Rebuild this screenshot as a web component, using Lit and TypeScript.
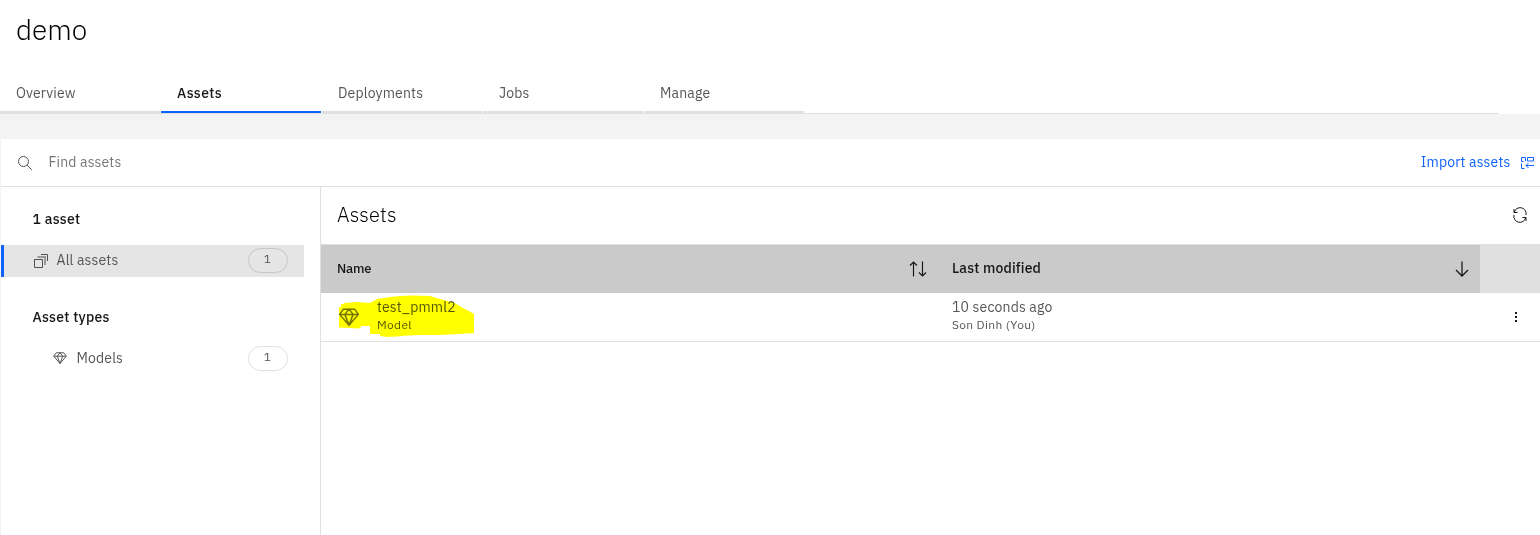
import { LitElement, html, css, svg } from "lit";
import { customElement } from "lit/decorators.js";

const diamond = svg`<path d="M8.5 5.500h15l5 7L16 27 3.500 12.500zM3.500 12.500h25M16 5.500l-5.500 7L16 27l5.500-14.500z" fill="none" stroke="currentColor" stroke-width="2" stroke-linejoin="round"/>`;

@customElement("app-root")
export class AppRoot extends LitElement {
  static styles = css`
    :host { display: block; height: 535px; overflow: hidden; background: #f3f3f3; color: #565656;
      font: 14px/18px "IBM Plex Sans", Roboto, "Liberation Sans", sans-serif; letter-spacing: 0.16px; }
    * { box-sizing: border-box; }
    svg { display: block; flex: none; }
    span { white-space: nowrap; }
    .page { height: 535px; display: flex; flex-direction: column; }
    .head { background: #fff; height: 114px; flex: none; display: flex; flex-direction: column; justify-content: space-between; }
    .title { margin: 0; padding: 12px 0 0 16px; font-size: 28px; line-height: 36px; font-weight: 300; letter-spacing: 0; color: #000; }
    .tabs { width: 1499px; height: 40px; display: flex; gap: 1px; border-bottom: 1px solid #e0e0e0; }
    .tab { width: 160px; height: 39px; padding: 10px 16px; border-bottom: 2px solid #e0e0e0; }
    .tab.on { color: #161616; font-weight: 500; border-color: #0f62fe; letter-spacing: 0.4px; }
    .panel { margin: 25px 0 0 1px; background: #fff; flex: 1; display: flex; flex-direction: column; min-height: 0; }
    .search { height: 48px; flex: none; border-bottom: 1px solid #e0e0e0; display: flex; align-items: center; padding: 0 5px 0 16px; color: #767676; }
    .search span { padding-bottom: 1px; }
    .find { margin-left: 15.5px; flex: 1; }
    .import { color: #0f62fe; margin-right: 10.5px; }
    .body { display: flex; flex: 1; min-height: 0; }
    .side { width: 320px; border-right: 1px solid #e0e0e0; padding-top: 23px; }
    .group { padding-left: 31.5px; color: #161616; font-weight: 500; height: 18px; letter-spacing: 0.25px; }
    .item { width: 303px; height: 32px; display: flex; align-items: center; padding: 0 16px 0 32px; }
    .all { margin: 17px 0 31px; background: #e5e5e5; border-left: 3px solid #0f62fe; padding-left: 29px; }
    .all .label { padding-bottom: 2px; margin-left: 7.5px; }
    .models { margin-top: 16px; padding-left: 51px; }
    .label { margin-left: 8.5px; flex: 1; }
    .pill { width: 40px; height: 25px; border: 1px solid #e0e0e0; border-radius: 13px; text-align: center; font-size: 12px; line-height: 20px; padding-right: 1px; }
    .all .pill { border-color: #c6c6c6; margin-bottom: 1px; }
    .main { flex: 1; min-width: 0; }
    .bar { height: 57px; display: flex; justify-content: space-between; padding: 14px 12px 0 16px; color: #000; }
    .bar span { font-size: 20px; line-height: 27px; font-weight: 300; letter-spacing: 0.2px; }
    .bar svg { margin-top: 6px; }
    .cols { height: 49px; display: grid; grid-template-columns: 615px 544px 1fr; background: #e0e0e0; border-top: 1px solid #e0e0e0; color: #161616; font-weight: 500; }
    .col { background: #cacaca; display: flex; align-items: center; justify-content: space-between; padding: 0 8px 0 16px; }
    .col span { padding-bottom: 2px; }
    .col .narrow { font-size: 13px; letter-spacing: -0.2px; padding-bottom: 1px; }
    .row { height: 49px; display: grid; grid-template-columns: 615px 544px 1fr; border-bottom: 1px solid #e0e0e0; }
    .name { position: relative; display: flex; padding: 5px 0 0 16px; }
    .gem { margin: 7px 16px 0 0; color: #747474; }
    .lines { display: flex; flex-direction: column; }
    .small { font-size: 12px; line-height: 18px; letter-spacing: 0.32px; }
    .mark { position: absolute; left: 17px; top: 2px; mix-blend-mode: multiply; }
    .when { padding: 5px 16px; display: flex; flex-direction: column; }
    .more { display: flex; justify-content: flex-end; align-items: center; padding-right: 16px; }
  `;

  render() {
    return html`<div class="page">
      <header class="head">
        <h1 class="title"><span>demo</span></h1>
        <nav class="tabs">
          ${["Overview", "Assets", "Deployments", "Jobs", "Manage"].map(t => html`<div class="tab ${t === "Assets" ? "on" : ""}"><span>${t}</span></div>`)}
        </nav>
      </header>
      <section class="panel">
        <div class="search">
          <svg width="16" height="16" viewBox="0 0 16 16"><path d="M10.200 10.200 14.800 14.800M6.500 1.500a5 5 0 1 1 0 10 5 5 0 0 1 0-10z" fill="none" stroke="#525252"/></svg>
          <span class="find">Find assets</span>
          <span class="import">Import assets</span>
          <svg width="14" height="14" viewBox="0 0 14 14" fill="none" stroke="#0f62fe"><path d="M2.500 5.500h-2v-4h4v3.500M6.500 1.500h6v3.500h-6zM3.500 12.500h-3v-5M5 9.500h8M7.500 7 5 9.500 7.500 12"/></svg>
        </div>
        <div class="body">
          <aside class="side">
            <div class="group"><span>1 asset</span></div>
            <div class="item all">
              <svg width="16" height="16" viewBox="0 0 16 16" fill="none"><path d="M4.500 4h7.500v8" stroke="#999" stroke-width="2"/><path d="M1.500 6.500h8v8h-8zM8 1.500h6.500V8" stroke="#525252"/></svg>
              <span class="label">All assets</span><span class="pill">1</span>
            </div>
            <div class="group"><span>Asset types</span></div>
            <div class="item models">
              <svg width="16" height="16" viewBox="0 0 32 32">${diamond}</svg>
              <span class="label">Models</span><span class="pill">1</span>
            </div>
          </aside>
          <main class="main">
            <div class="bar"><span>Assets</span>
              <svg width="16" height="16" viewBox="0 0 16 16" fill="none" stroke="#161616"><path d="M5.500 5.500h-3.500v-3.500M2.300 5.300A6 6 0 0 1 14 8M10.500 10.500h3.500v3.500M13.700 10.700A6 6 0 0 1 2 8"/></svg>
            </div>
            <div class="cols">
              <div class="col"><span class="narrow">Name</span>
                <svg width="20" height="20" viewBox="0 0 20 20" fill="none" stroke="#161616" stroke-width="1.150"><path d="M5.500 17.500V3M2 6.500 5.500 3 9 6.500M14.500 2.500V17M11 13.500l3.500 3.500 3.500-3.500"/></svg></div>
              <div class="col"><span>Last modified</span>
                <svg width="20" height="20" viewBox="0 0 20 20" fill="none" stroke="#161616" stroke-width="1.250"><path d="M10 2.500V17M4 11l6 6 6-6"/></svg></div>
            </div>
            <div class="row">
              <div class="name">
                <svg class="gem" width="24" height="24" viewBox="0 0 32 32">${diamond}</svg>
                <div class="lines"><span>test_pmml2</span><span class="small">Model</span></div>
                <svg class="mark" width="138" height="44" viewBox="0 0 138 44"><path fill="#ff0" d="M1 32.500V12h2V9h3V8l13-1 13 1 7-4 13-2 10-1 13-.5 17 .5 10 3 15 4 6 4 6 3 7 4v19l-16 1-18 1H82l-13 .500-10 1-10 .500-7-1v-2H32v-8h-8l-3 2.500z"/></svg>
              </div>
              <div class="when"><span>10 seconds ago</span><span class="small">Son Dinh (You)</span></div>
              <div class="more"><svg width="16" height="16" viewBox="0 0 16 16" fill="#161616"><path d="M7 3h2v2H7zM7 7h2v2H7zM7 11h2v2H7z"/></svg></div>
            </div>
          </main>
        </div>
      </section>
    </div>`;
  }
}
